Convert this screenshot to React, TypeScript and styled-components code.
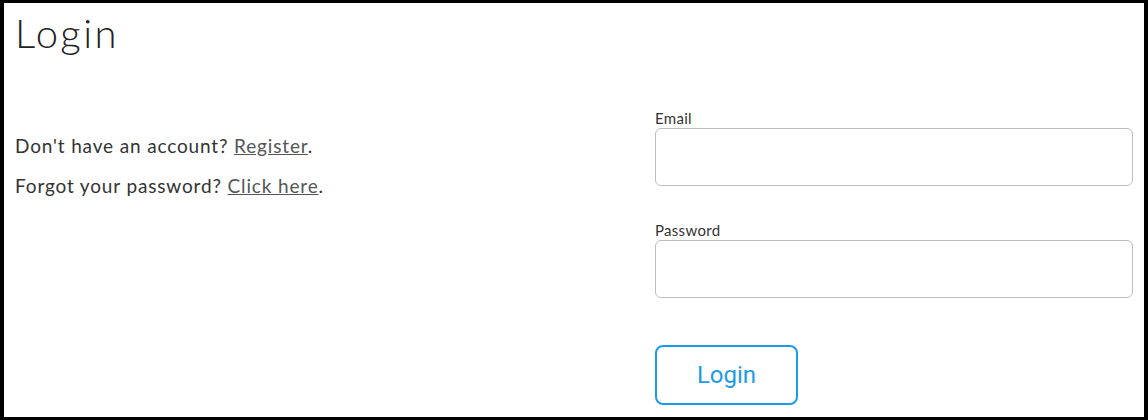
import React from 'react';
import styled, { createGlobalStyle } from 'styled-components';

const GlobalStyle = createGlobalStyle`
  html, body {
    margin: 0;
    padding: 0;
    background: #000;
    overflow: hidden;
  }
  body {
    font-family: Lato, "Open Sans", Arial, sans-serif;
    color: #333;
  }
`;

const Frame = styled.div`
  box-sizing: border-box;
  width: 1148px;
  height: 414px;
  margin: 3px 0 0;
  border-left: 4px solid #000;
  border-right: 4px solid #000;
  background: #fff;
  padding: 0 11px;
  overflow: hidden;
`;

const Title = styled.h1`
  margin: 6px 0 0;
  font-size: 40px;
  font-weight: 300;
  line-height: 48px;
  letter-spacing: 2.4px;
  color: #222;
`;

const Row = styled.div`
  display: grid;
  grid-template-columns: 640px 1fr;
  margin-top: 51px;
`;

const Side = styled.div`
  padding-top: 23px;
`;

const Line = styled.p`
  margin: 0 0 10px;
  font-size: 19px;
  line-height: 30px;
  letter-spacing: 0.85px;
  color: #333;
`;

const Link = styled.a`
  color: #555;
  text-decoration: underline;
  cursor: pointer;
`;

const Form = styled.form`
  display: flex;
  flex-direction: column;
`;

const Field = styled.div`
  display: flex;
  flex-direction: column;
  margin-bottom: 34px;
`;

const Label = styled.label`
  font-size: 15px;
  line-height: 20px;
  letter-spacing: 0.3px;
  color: #333;
`;

const Input = styled.input`
  box-sizing: border-box;
  height: 58px;
  width: 478px;
  border: 1px solid #bdbdbd;
  border-radius: 6px;
  background: #fff;
  font-size: 18px;
  padding: 0 12px;
  outline: none;
`;

const Button = styled.button<{ accent: string }>`
  box-sizing: border-box;
  margin-top: 13px;
  width: 143px;
  height: 60px;
  border: 2px solid ${(p) => p.accent};
  border-radius: 8px;
  background: #fff;
  color: ${(p) => p.accent};
  font-family: Roboto, Arial, sans-serif;
  font-size: 24px;
  cursor: pointer;
`;

export default function App() {
  return (
    <>
      <GlobalStyle />
      <Frame>
        <Title>Login</Title>
        <Row>
          <Side>
            <Line>
              Don't have an account? <Link>Register</Link>.
            </Line>
            <Line>
              Forgot your password? <Link>Click here</Link>.
            </Line>
          </Side>
          <Form onSubmit={(e) => e.preventDefault()}>
            <Field>
              <Label>Email</Label>
              <Input type="email" />
            </Field>
            <Field>
              <Label>Password</Label>
              <Input type="password" />
            </Field>
            <Button accent="#1e9be6">Login</Button>
          </Form>
        </Row>
      </Frame>
    </>
  );
}
